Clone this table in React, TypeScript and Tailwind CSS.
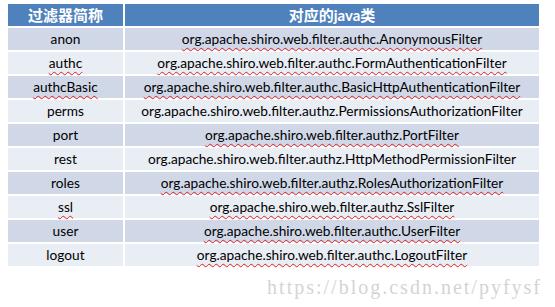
const rows: { name: string; cls: string; nameWavy?: boolean; clsWavy?: boolean }[] = [
  { name: 'anon', cls: 'org.apache.shiro.web.filter.authc.AnonymousFilter', clsWavy: true },
  { name: 'authc', cls: 'org.apache.shiro.web.filter.authc.FormAuthenticationFilter', nameWavy: true, clsWavy: true },
  { name: 'authcBasic', cls: 'org.apache.shiro.web.filter.authc.BasicHttpAuthenticationFilter', nameWavy: true, clsWavy: true },
  { name: 'perms', cls: 'org.apache.shiro.web.filter.authz.PermissionsAuthorizationFilter' },
  { name: 'port', cls: 'org.apache.shiro.web.filter.authz.PortFilter', clsWavy: true },
  { name: 'rest', cls: 'org.apache.shiro.web.filter.authz.HttpMethodPermissionFilter' },
  { name: 'roles', cls: 'org.apache.shiro.web.filter.authz.RolesAuthorizationFilter', clsWavy: true },
  { name: 'ssl', cls: 'org.apache.shiro.web.filter.authz.SslFilter', nameWavy: true, clsWavy: true },
  { name: 'user', cls: 'org.apache.shiro.web.filter.authc.UserFilter', clsWavy: true },
  { name: 'logout', cls: 'org.apache.shiro.web.filter.authc.LogoutFilter', clsWavy: true },
]

const wavy = 'underline decoration-wavy decoration-[#e02020] decoration-1 underline-offset-[3px]'

export default function App() {
  return (
    <div className="w-[555px] h-[307px] bg-white font-['Lato','Noto_Sans_CJK_SC',sans-serif] text-[13.7px] text-black">
      <div className="pt-[4px] pl-[8px]">
        <div className="grid grid-cols-[115px_414px] gap-[2px] w-[531px]">
          <div className="h-[22px] bg-[#4f81bd] flex items-center justify-center text-white font-bold text-[15px]">
            过滤器简称
          </div>
          <div className="h-[22px] bg-[#4f81bd] flex items-center justify-center text-white font-bold text-[15px]">
            对应的java类
          </div>
          {rows.map((r, i) => {
            const bg = i % 2 === 0 ? 'bg-[#d0d8e8]' : 'bg-[#e9edf4]'
            return (
              <div key={r.name} className="contents">
                <div className={`h-[22px] ${bg} flex items-center justify-center pt-[1px]`}>
                  <span className={r.nameWavy ? wavy : ''}>{r.name}</span>
                </div>
                <div className={`h-[22px] ${bg} flex items-center justify-center pt-[1px]`}>
                  <span className={r.clsWavy ? wavy : ''}>{r.cls}</span>
                </div>
              </div>
            )
          })}
        </div>
        <div className="flex justify-end pr-[13px] mt-[11px]">
          <span className="font-['Liberation_Serif',serif] text-[20px] tracking-[2px] text-[#d4d4d4] leading-none">
            https://blog.csdn.net/pyfysf
          </span>
        </div>
      </div>
    </div>
  )
}
